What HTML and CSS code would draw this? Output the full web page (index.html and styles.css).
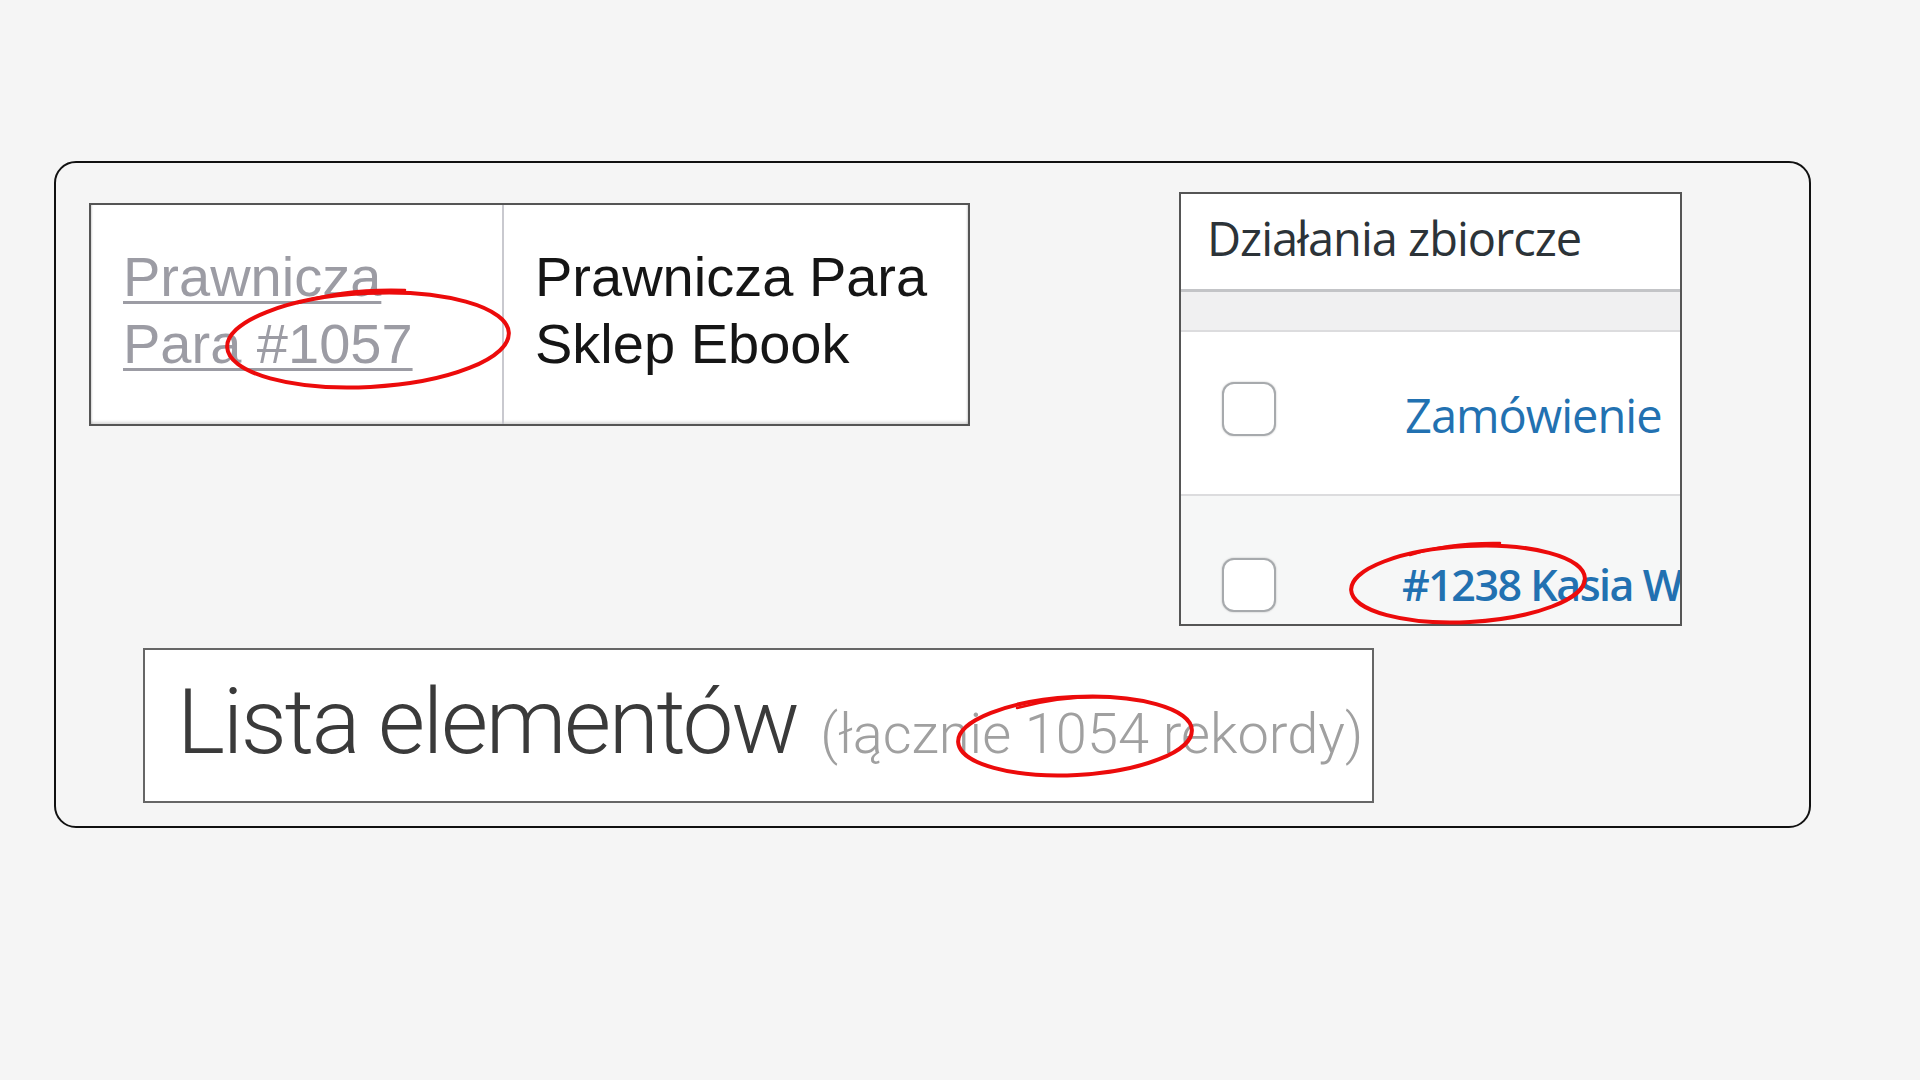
FILE: index.html
```html
<!DOCTYPE html>
<html lang="pl">
<head>
<meta charset="utf-8">
<title>Numery zamówień</title>
<link rel="stylesheet" href="styles.css">
</head>
<body>
<div class="card">
  <div class="row-top">
    <div class="shot shot-order">
      <div class="cell cell-link"><a class="order-link" href="#">Prawnicza<br>Para #1057</a></div>
      <div class="cell cell-name">Prawnicza Para<br>Sklep Ebook</div>
    </div>
    <div class="shot shot-bulk">
      <div class="bulk-head">Działania zbiorcze</div>
      <div class="bulk-band"></div>
      <div class="bulk-row"><span class="cb"></span><span class="col-title">Zamówienie</span></div>
      <div class="bulk-row alt"><span class="cb"></span><span class="order-no">#1238 Kasia W</span></div>
    </div>
  </div>
  <div class="shot shot-list"><span class="list-title">Lista elementów</span> <span class="list-count">(łącznie 1054 rekordy)</span></div>
  <svg class="marks" viewBox="54 161 1757 667" xmlns="http://www.w3.org/2000/svg">
    <g fill="none" stroke="#ec0b0b" stroke-linecap="round">
      <ellipse cx="368" cy="340" rx="141" ry="47" stroke-width="4" transform="rotate(-3 368 340)"/>
      <path d="M298 303 Q345 288 405 290" stroke-width="2.5"/>
      <ellipse cx="1468" cy="584" rx="117" ry="38" stroke-width="4" transform="rotate(-3 1468 584)"/>
      <path d="M1410 555 Q1450 542 1500 543" stroke-width="2.5"/>
      <ellipse cx="1075" cy="736" rx="117" ry="39" stroke-width="4" transform="rotate(-3 1075 736)"/>
      <path d="M1017 708 Q1060 696 1105 697" stroke-width="2.5"/>
    </g>
  </svg>
</div>
</body>
</html>
```
FILE: styles.css
```css
html, body {
  margin: 0;
  padding: 0;
  background: #f5f5f5;
}

.card {
  position: relative;
  box-sizing: border-box;
  width: 1757px;
  height: 667px;
  margin: 161px 0 0 54px;
  border: 2px solid #111;
  border-radius: 22px;
  background: #f5f5f5;
}

.row-top {
  display: flex;
  align-items: flex-start;
}

.shot {
  box-sizing: border-box;
  background: #fff;
}

/* screenshot 1 */
.shot-order {
  display: flex;
  width: 881px;
  height: 223px;
  margin: 40px 0 0 33px;
  border: 2px solid #555;
  box-shadow: inset 0 -3px 3px -1px rgba(0, 0, 0, 0.15), inset -2px 0 2px -1px rgba(0, 0, 0, 0.14), inset 2px 0 2px -1px rgba(0, 0, 0, 0.14);
  font-family: "Liberation Sans", Arial, sans-serif;
  font-size: 56px;
  line-height: 67px;
}

.cell {
  box-sizing: border-box;
  padding-top: 38px;
}

.cell-link {
  width: 413px;
  padding-left: 32px;
  border-right: 2px solid #c9c9cf;
}

.cell-name {
  padding-left: 31px;
  color: #151515;
}

.order-link {
  color: #9c9ca4;
  text-decoration: underline;
  text-decoration-thickness: 3px;
  text-underline-offset: 5px;
}

/* screenshot 2 */
.shot-bulk {
  width: 503px;
  height: 434px;
  margin: 29px 0 0 209px;
  border: 2px solid #555;
  overflow: hidden;
  font-family: "Open Sans", "Noto Sans", sans-serif;
  font-size: 47px;
  line-height: 64px;
  letter-spacing: -1px;
  white-space: nowrap;
}

.bulk-head {
  box-sizing: border-box;
  height: 95px;
  padding: 12px 0 0 26px;
  color: #2c3338;
}

.bulk-band {
  height: 38px;
  border-top: 3px solid #c3c4c7;
  border-bottom: 2px solid #dcdcde;
  background: #f0f0f1;
}

.bulk-row {
  box-sizing: border-box;
  display: flex;
  align-items: flex-start;
  height: 164px;
  padding: 50px 0 0 41px;
  border-bottom: 2px solid #dcdcde;
  background: #fff;
}

.bulk-row.alt {
  height: 140px;
  padding-top: 62px;
  border-bottom: none;
  background: #f6f7f7;
}

.cb {
  flex: none;
  box-sizing: border-box;
  width: 54px;
  height: 54px;
  border: 2px solid #a7aaad;
  border-radius: 12px;
  background: #fff;
  box-shadow: 0 0 2px rgba(0, 0, 0, 0.25);
}

.col-title {
  margin: 1px 0 0 129px;
  color: #2271b1;
}

.order-no {
  margin: -5px 0 0 126px;
  color: #2271b1;
  font-size: 43px;
  font-weight: 600;
  letter-spacing: -1.5px;
}

/* screenshot 3 */
.shot-list {
  width: 1231px;
  height: 155px;
  margin: 22px 0 0 87px;
  padding: 27px 0 0 32px;
  border: 2px solid #666;
  font-family: Roboto, "Open Sans", sans-serif;
  font-size: 91px;
  line-height: 91px;
  white-space: nowrap;
}

.list-title {
  font-weight: 300;
  letter-spacing: -2.3px;
  color: #3a3a3a;
}

.list-count {
  font-size: 56px;
  font-weight: 300;
  letter-spacing: 0;
  color: #a0a0a0;
}

/* annotations */
.marks {
  position: absolute;
  left: -2px;
  top: -2px;
  width: 1757px;
  height: 667px;
  overflow: visible;
  pointer-events: none;
}
```
